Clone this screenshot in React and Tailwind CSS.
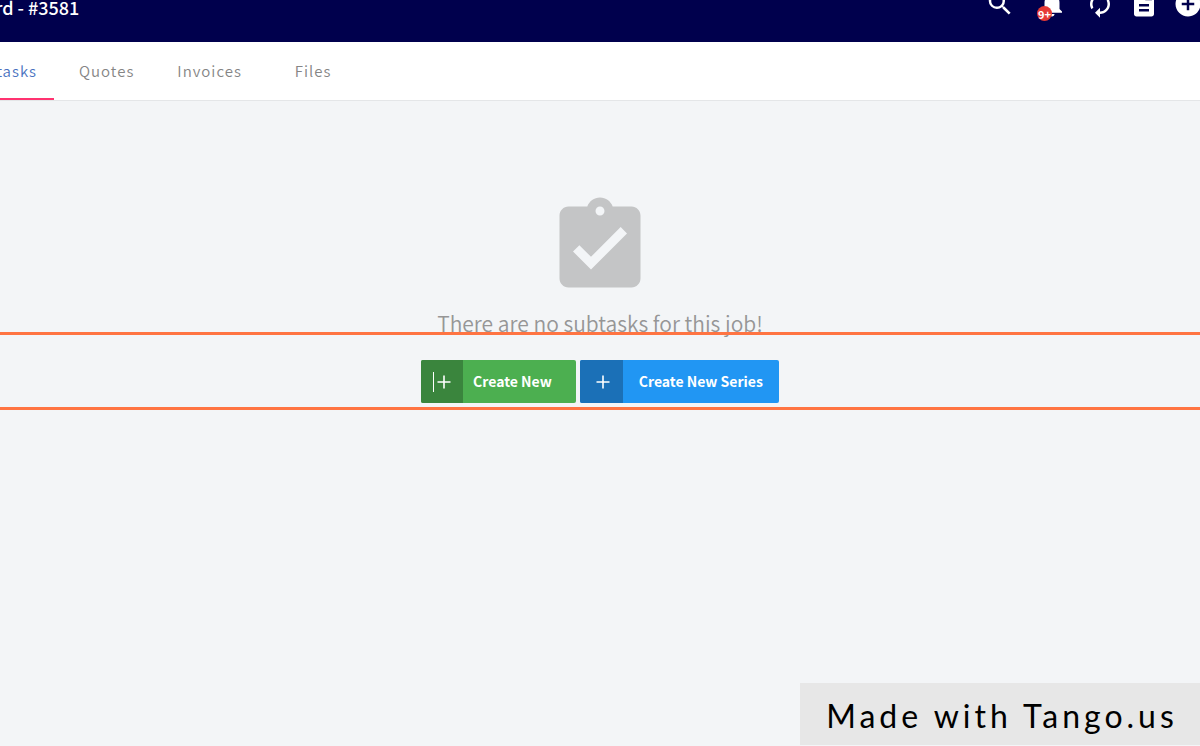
import { MdSearch, MdNotifications, MdAutorenew, MdDescription, MdAddCircle, MdAssignmentTurnedIn } from 'react-icons/md'

const tabs = [
  { label: 'tasks', active: true, className: 'w-[54px] pr-[17px] justify-end' },
  { label: 'Quotes', className: 'px-6' },
  { label: 'Invoices', className: 'pl-[18px] pr-6' },
  { label: 'Files', className: 'px-7' }
]

const PlusIcon = () => (
  <svg className="h-[14px] w-[14px]" viewBox="0 0 14 14" fill="none" stroke="currentColor" strokeWidth="1.6" aria-hidden="true">
    <path d="M7 0.5V13.5M0.5 7H13.5" />
  </svg>
)

const Header = () => (
  <header className="flex h-[42px] items-start justify-between overflow-hidden bg-[#00004d] text-white">
    <h1 className="-ml-[5px] -mt-[5px] text-lg font-medium leading-6">rd - #3581</h1>
    <div className="-mr-[3px] -mt-[11px] flex gap-[14px]">
      <button type="button" aria-label="Search" className="mr-2">
        <MdSearch className="h-[30px] w-[30px]" />
      </button>
      <button type="button" aria-label="Notifications" className="relative mr-1">
        <MdNotifications className="h-[30px] w-[30px]" />
        <span className="absolute -bottom-[2px] left-0 flex h-[15px] w-[15px] items-center justify-center rounded-full bg-[#e53935] text-[11px] font-bold leading-3">
          9+
        </span>
      </button>
      <button type="button" aria-label="Refresh">
        <MdAutorenew className="h-[30px] w-[30px]" />
      </button>
      <button type="button" aria-label="Notes">
        <MdDescription className="h-[30px] w-[30px]" />
      </button>
      <button type="button" aria-label="Add">
        <MdAddCircle className="h-[30px] w-[30px]" />
      </button>
    </div>
  </header>
)

const TabBar = () => (
  <nav className="flex h-[59px] overflow-hidden border-b border-[#e4e6e8] bg-white text-[15px] font-[350] tracking-[1px]">
    {tabs.map((tab) => (
      <a
        key={tab.label}
        href="#"
        className={`flex items-center ${tab.className} ${
          tab.active ? 'border-b-2 border-[#ff3370] pt-[2px] text-[#4a72c0]' : 'ml-px text-[#858585]'
        }`}
      >
        {tab.label}
      </a>
    ))}
  </nav>
)

const EmptyState = () => (
  <main className="flex flex-col items-center pt-[92px]">
    <MdAssignmentTurnedIn className="h-[108px] w-[108px] text-[#c4c5c6]" />
    <p className="mt-[6px] text-[21px] font-[350] leading-8 text-[#969696]">There are no subtasks for this job!</p>

    <div className="relative mt-[21px] flex w-full justify-center gap-1 text-sm font-bold leading-5 text-white">
      {/* Highlighted step area */}
      <div className="pointer-events-none absolute inset-x-0 -bottom-[7px] -top-7 border-y-[3px] border-[#ff7442]"></div>
      <button type="button" className="flex h-[43px] overflow-hidden rounded-xs bg-[#4caf50]">
        <span className="flex h-full w-[42px] items-center justify-center gap-[3px] bg-[#3a853d]">
          <span className="h-5 w-px bg-white"></span>
          <PlusIcon />
        </span>
        <span className="pl-[10px] pr-6 pt-[11px]">Create New</span>
      </button>
      <button type="button" className="flex h-[43px] overflow-hidden rounded-xs bg-[#2196f3]">
        <span className="flex h-full w-[43px] items-center justify-center bg-[#1b70b7] pl-[3px]">
          <PlusIcon />
        </span>
        <span className="px-4 pt-[11px]">Create New Series</span>
      </button>
    </div>
  </main>
)

const App = () => {
  return (
    <div className="relative flex min-h-screen flex-col bg-[#f3f5f7] font-['Noto_Sans_CJK_SC','Noto_Sans',sans-serif]">
      <Header />
      <TabBar />
      <EmptyState />
      <footer className="absolute bottom-px right-0 flex h-[62px] w-[400px] items-center justify-center bg-[#e7e7e7] pl-1 pt-1 font-[Lato,sans-serif] text-[32px] tracking-[4px] text-black">
        Made with Tango.us
      </footer>
    </div>
  )
}

export default App
